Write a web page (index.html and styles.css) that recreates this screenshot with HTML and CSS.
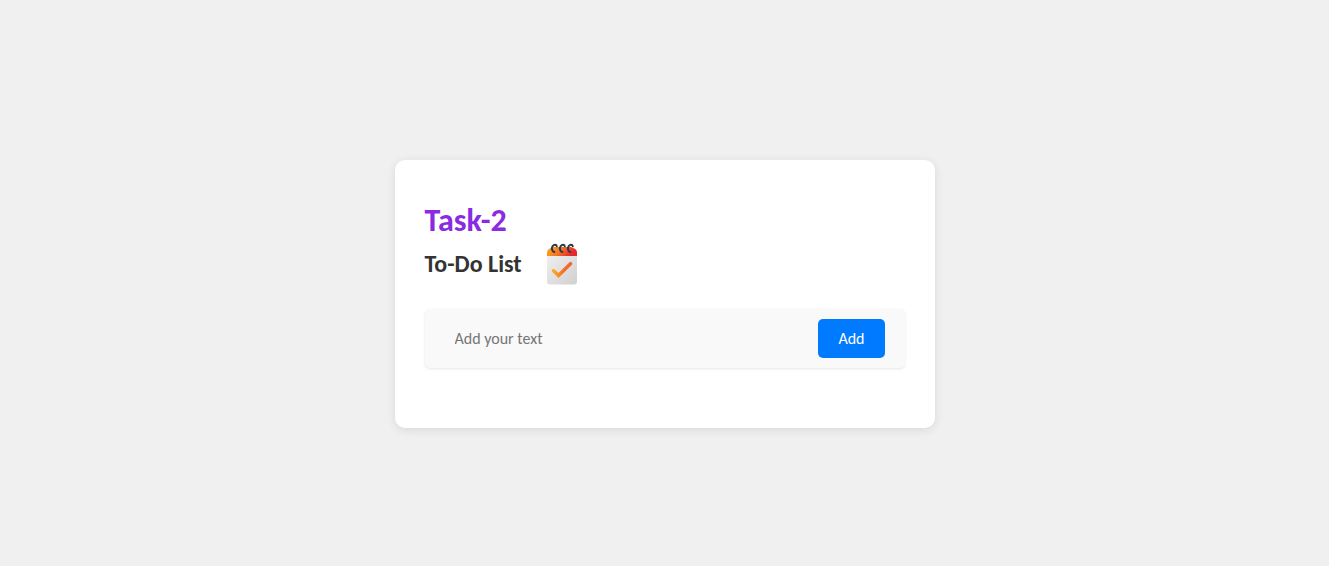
FILE: index.html
```html
<!DOCTYPE html>
<html lang="en">
<head>
<meta charset="utf-8">
<meta name="viewport" content="width=device-width, initial-scale=1">
<title>To-Do List</title>
<link rel="stylesheet" href="styles.css">
</head>
<body>
<main class="page">
  <section class="todo-app">
    <h1 class="title">Task-2</h1>
    <h2 class="subtitle">To-Do List
      <svg class="icon" viewBox="0 0 30 42" aria-hidden="true">
        <defs>
          <linearGradient id="top" x1="0" y1="0" x2="1" y2="0.25">
            <stop offset="0" stop-color="#fdb022"/><stop offset="0.5" stop-color="#f57423"/><stop offset="0.95" stop-color="#e8272c"/>
          </linearGradient>
          <linearGradient id="paper" x1="0" y1="0" x2="1" y2="1">
            <stop offset="0" stop-color="#efefef"/><stop offset="1" stop-color="#d0d0d0"/>
          </linearGradient>
          <linearGradient id="tick" x1="0" y1="0" x2="1" y2="0">
            <stop offset="0" stop-color="#fbaa22"/><stop offset="0.6" stop-color="#f37028"/><stop offset="1" stop-color="#ef6830"/>
          </linearGradient>
        </defs>
        <path d="M0 12H30V38.500Q30 41.500 27 41.500H3Q0 41.500 0 38.500Z" fill="url(#paper)"/>
        <path d="M0 13V9.500Q0 6 4 5L6 4H24L26 5Q30 6 30 9.500V13Z" fill="url(#top)"/>
        <g fill="none" stroke="#273b49" stroke-width="2" stroke-linecap="round">
          <path d="M9.800 3.200C9.300 1.300 7 1.300 5.700 3C4.300 5 4.800 8.700 7.300 9"/>
          <path d="M17.800 3.200C17.300 1.300 15 1.300 13.700 3C12.300 5 12.800 8.700 15.300 9"/>
          <path d="M25.800 3.200C25.300 1.300 23 1.300 21.700 3C20.300 5 20.800 8.700 23.300 9"/>
        </g>
        <path d="M6.500 27.800L11.500 32.500L23.500 20.700" fill="none" stroke="url(#tick)" stroke-width="3.500" stroke-linecap="round" stroke-linejoin="miter"/>
      </svg>
    </h2>
    <form class="row">
      <input class="field" type="text" placeholder="Add your text" aria-label="Add your text">
      <button class="add" type="button">Add</button>
    </form>
  </section>
</main>
</body>
</html>
```
FILE: styles.css
```css
* { box-sizing: border-box; margin: 0; padding: 0; }
body {
  background: #f0f0f0;
  font-family: Carlito, Calibri, Lato, sans-serif;
}
.page { min-height: 100vh; padding: 160px 20px 20px; }
.todo-app {
  max-width: 540px;
  margin: 0 auto;
  padding: 40px 30px 60px;
  background: #fff;
  border-radius: 10px;
  box-shadow: 0 2px 10px rgba(0, 0, 0, 0.1);
}
.title {
  color: #8a2be2;
  font-size: 32px;
  line-height: 42px;
}
.subtitle {
  display: flex;
  align-items: center;
  gap: 25px;
  margin: 1px 0 24px;
  color: #333;
  font-size: 24px;
  line-height: 42px;
}
.icon { width: 30px; height: 42px; }
.row {
  display: flex;
  align-items: center;
  padding: 10px 20px;
  background: #f9f9f9;
  border-radius: 5px;
  box-shadow: 0 1px 3px rgba(0, 0, 0, 0.1);
}
.field {
  flex: 1;
  min-width: 0;
  padding: 10px;
  border: 0;
  outline: 0;
  background: transparent;
  font: inherit;
  font-size: 16px;
  line-height: 19px;
}
.field::placeholder { color: #757575; }
.add {
  padding: 10px 20px;
  border: 0;
  border-radius: 5px;
  background: #007bff;
  color: #fff;
  font: inherit;
  font-size: 16px;
  line-height: 19px;
  cursor: pointer;
}
```
